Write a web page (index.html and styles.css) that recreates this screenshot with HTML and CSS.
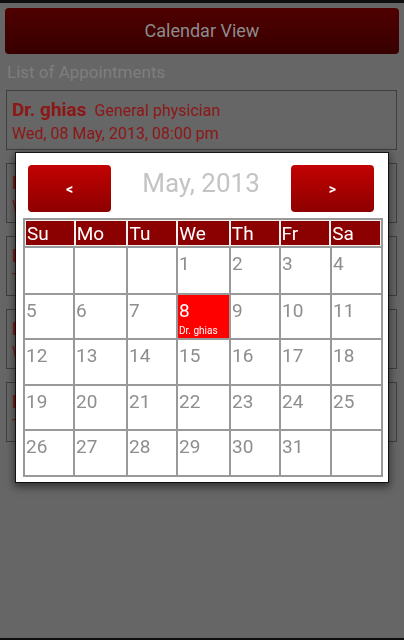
FILE: index.html
```html
<!DOCTYPE html>
<html>
<head>
<meta charset="utf-8">
<link rel="stylesheet" href="styles.css">
</head>
<body>
<div class="screen">
  <div class="top-btn">Calendar View</div>
  <div class="list-title">List of Appointments</div>
  <div class="cards">
    <div class="card">
      <div class="card-l1"><span class="doc">Dr. ghias</span><span class="spec">General physician</span></div>
      <div class="card-l2">Wed, 08 May, 2013, 08:00 pm</div>
    </div>
    <div class="card">
      <div class="card-l1"><span class="doc">Dr. ahmed</span><span class="spec">Dentist</span></div>
      <div class="card-l2">Wed, 15 May, 2013, 10:00 am</div>
    </div>
    <div class="card">
      <div class="card-l1"><span class="doc">Dr. imran</span><span class="spec">Cardiologist</span></div>
      <div class="card-l2">Thu, 23 May, 2013, 11:30 am</div>
    </div>
    <div class="card">
      <div class="card-l1"><span class="doc">Dr. bilal</span><span class="spec">Surgeon</span></div>
      <div class="card-l2">Wed, 05 Jun, 2013, 09:00 am</div>
    </div>
    <div class="card">
      <div class="card-l1"><span class="doc">Dr. kamal</span><span class="spec">Dermatologist</span></div>
      <div class="card-l2">Tue, 11 Jun, 2013, 04:00 pm</div>
    </div>
  </div>
</div>

<div class="overlay">
  <div class="dialog">
    <div class="nav">
      <div class="nav-btn">&lt;</div>
      <div class="month">May, 2013</div>
      <div class="nav-btn">&gt;</div>
    </div>
    <div class="cal">
      <div class="cal-head">
        <span>Su</span><span>Mo</span><span>Tu</span><span>We</span><span>Th</span><span>Fr</span><span>Sa</span>
      </div>
      <div class="cal-body">
        <div class="day"></div><div class="day"></div><div class="day"></div>
        <div class="day">1</div><div class="day">2</div><div class="day">3</div><div class="day">4</div>
        <div class="day">5</div><div class="day">6</div><div class="day">7</div>
        <div class="day sel">8<span class="ev">Dr. ghias</span></div>
        <div class="day">9</div><div class="day">10</div><div class="day">11</div>
        <div class="day">12</div><div class="day">13</div><div class="day">14</div><div class="day">15</div><div class="day">16</div><div class="day">17</div><div class="day">18</div>
        <div class="day">19</div><div class="day">20</div><div class="day">21</div><div class="day">22</div><div class="day">23</div><div class="day">24</div><div class="day">25</div>
        <div class="day">26</div><div class="day">27</div><div class="day">28</div><div class="day">29</div><div class="day">30</div><div class="day">31</div><div class="day"></div>
      </div>
    </div>
  </div>
</div>
</body>
</html>
```

FILE: styles.css
```css
html, body {
  margin: 0;
  padding: 0;
}
body {
  background: #666666;
  font-family: Roboto, "Noto Sans", sans-serif;
  width: 404px;
  height: 640px;
  overflow: hidden;
}
.screen {
  box-sizing: border-box;
  height: 640px;
  border-top: 3px solid #0e0e0e;
  border-bottom: 2px solid #0e0e0e;
  padding: 5px 5px 0 5px;
}
.top-btn {
  height: 46px;
  line-height: 46px;
  border-radius: 4px;
  background: linear-gradient(#4f0000, #380000);
  color: #8c8c8c;
  font-size: 18px;
  text-align: center;
}
.list-title {
  margin-top: 8px;
  padding-left: 2px;
  font-size: 17px;
  line-height: 20px;
  color: #7e7e7e;
}
.cards {
  margin: 8px 2px 0 1px;
  display: flex;
  flex-direction: column;
  gap: 13px;
}
.card {
  border: 1px solid #3e3e3e;
  padding: 6px 5px 4px 5px;
  color: #8c1717;
}
.card-l1 {
  line-height: 25px;
  white-space: nowrap;
}
.doc {
  font-size: 19px;
  font-weight: bold;
}
.spec {
  font-size: 16px;
  margin-left: 8px;
}
.card-l2 {
  font-size: 16px;
  line-height: 22px;
}

.overlay {
  position: fixed;
  inset: 0;
}
.dialog {
  position: absolute;
  left: 16px;
  top: 153px;
  width: 372px;
  height: 329px;
  box-sizing: border-box;
  background: #ffffff;
  padding: 12px 5px 5px 7px;
  box-shadow: 0 0 0 1px rgba(0,0,0,0.75), 0 3px 8px 2px rgba(0,0,0,0.5);
}
.nav {
  display: flex;
  justify-content: space-between;
  align-items: flex-start;
  margin: 0 9px 0 5px;
  height: 47px;
}
.nav-btn {
  width: 83px;
  height: 47px;
  box-sizing: border-box;
  padding-top: 2px;
  border-radius: 4px;
  background: linear-gradient(#c20202, #8e0000);
  color: #ffffff;
  font-size: 14px;
  font-weight: bold;
  line-height: 45px;
  text-align: center;
}
.month {
  margin-top: 3px;
  font-size: 26px;
  line-height: 30px;
  color: #c4c4c4;
}
.cal {
  margin-top: 6px;
  background: #999999;
  padding: 2px;
  display: flex;
  flex-direction: column;
  gap: 2px;
}
.cal-head {
  display: grid;
  grid-template-columns: 48fr 51fr 48fr 51fr 48fr 49fr 49fr;
  gap: 2px;
  background: #f0f0f0;
  padding: 1px;
}
.cal-head span {
  background: #8b0000;
  color: #ffffff;
  font-size: 19px;
  line-height: 23px;
  height: 23px;
  padding: 1px 0 0 1px;
}
.cal-body {
  display: grid;
  grid-template-columns: 48px 51px 48px 51px 48px 49px 49px;
  grid-template-rows: 45px 43px 44px 43px 44px;
  gap: 2px;
}
.day {
  background: #ffffff;
  color: #8e8e8e;
  font-size: 19px;
  line-height: 22px;
  padding: 5px 0 0 1px;
  overflow: hidden;
}
.day.sel {
  background: #ff0000;
  color: #ffffff;
}
.ev {
  display: block;
  font-size: 10px;
  line-height: 12px;
  margin-top: 3px;
}
```
